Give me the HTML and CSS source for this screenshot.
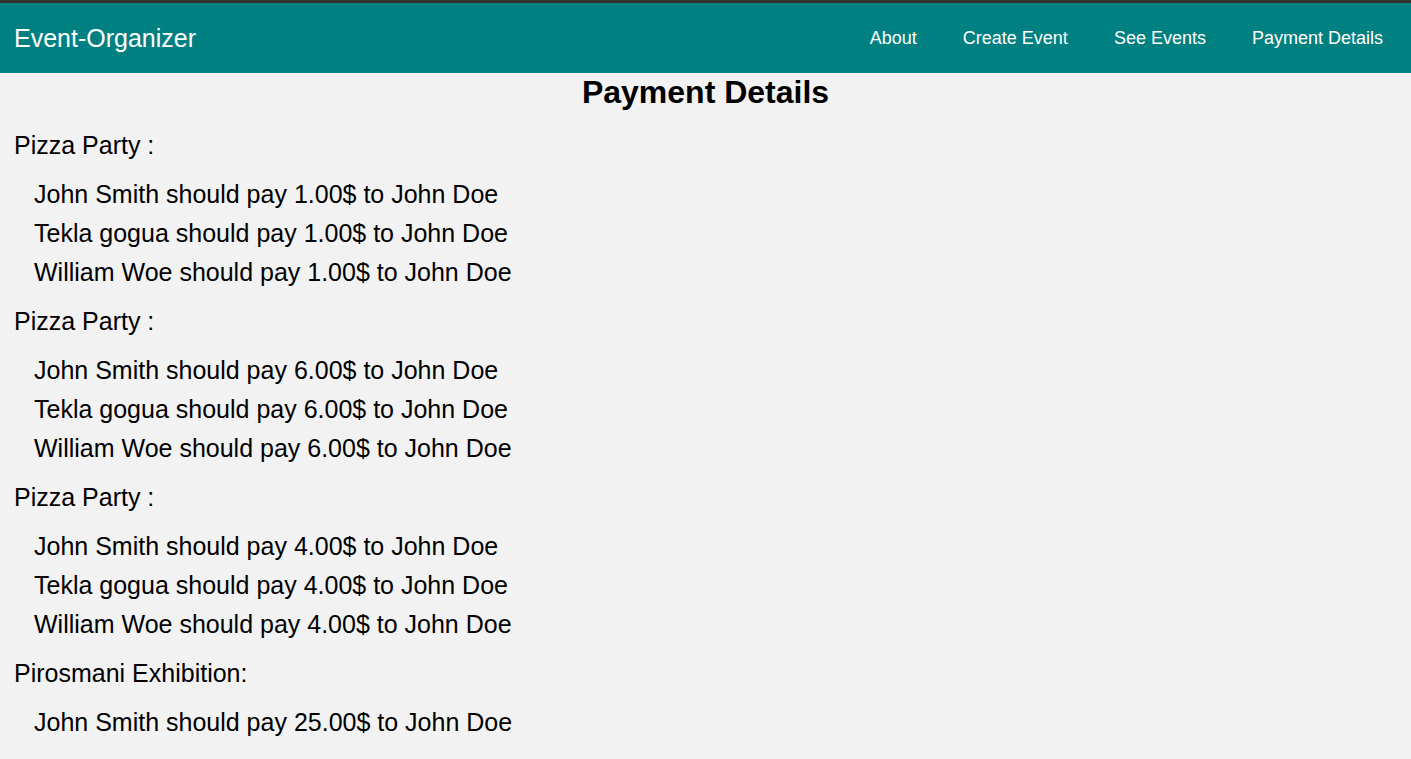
FILE: index.html
```html
<!DOCTYPE html>
<html>
<head>
<meta charset="utf-8">
<link rel="stylesheet" href="styles.css">
</head>
<body>
<div class="topline"></div>
<nav class="navbar">
  <div class="brand">Event-Organizer</div>
  <div class="links">
    <a href="#">About</a>
    <a href="#">Create Event</a>
    <a href="#">See Events</a>
    <a href="#">Payment Details</a>
  </div>
</nav>
<main class="content">
  <h1 class="title">Payment Details</h1>
  <section class="group">
    <div class="event">Pizza Party :</div>
    <ul class="payments">
      <li>John Smith should pay 1.00$ to John Doe</li>
      <li>Tekla gogua should pay 1.00$ to John Doe</li>
      <li>William Woe should pay 1.00$ to John Doe</li>
    </ul>
  </section>
  <section class="group">
    <div class="event">Pizza Party :</div>
    <ul class="payments">
      <li>John Smith should pay 6.00$ to John Doe</li>
      <li>Tekla gogua should pay 6.00$ to John Doe</li>
      <li>William Woe should pay 6.00$ to John Doe</li>
    </ul>
  </section>
  <section class="group">
    <div class="event">Pizza Party :</div>
    <ul class="payments">
      <li>John Smith should pay 4.00$ to John Doe</li>
      <li>Tekla gogua should pay 4.00$ to John Doe</li>
      <li>William Woe should pay 4.00$ to John Doe</li>
    </ul>
  </section>
  <section class="group">
    <div class="event">Pirosmani Exhibition:</div>
    <ul class="payments">
      <li>John Smith should pay 25.00$ to John Doe</li>
    </ul>
  </section>
</main>
</body>
</html>
```

FILE: styles.css
```css
html, body {
  margin: 0;
  padding: 0;
  background: #f2f2f2;
  font-family: "Liberation Sans", Arial, sans-serif;
  color: #000;
}
.topline {
  height: 3px;
  background: #333333;
}
.navbar {
  height: 70px;
  background: #008080;
  display: flex;
  align-items: center;
  justify-content: space-between;
  padding: 0 5px 0 14px;
}
.brand {
  color: #fff;
  font-size: 25px;
  line-height: 30px;
  padding-bottom: 1px;
}
.links {
  display: flex;
  align-items: center;
}
.links a {
  color: #fff;
  text-decoration: none;
  font-size: 18px;
  line-height: 22px;
  padding: 0 23px;
}
.content {
  padding: 0 14px;
}
.title {
  margin: 0;
  text-align: center;
  font-size: 32px;
  line-height: 38px;
  font-weight: bold;
}
.group {
  margin-top: 15px;
}
.group + .group {
  margin-top: 0;
}
.event {
  font-size: 25px;
  line-height: 39px;
}
.payments {
  list-style: none;
  margin: 10px 0;
  padding: 0 0 0 20px;
}
.payments li {
  font-size: 25px;
  line-height: 39px;
}
```
